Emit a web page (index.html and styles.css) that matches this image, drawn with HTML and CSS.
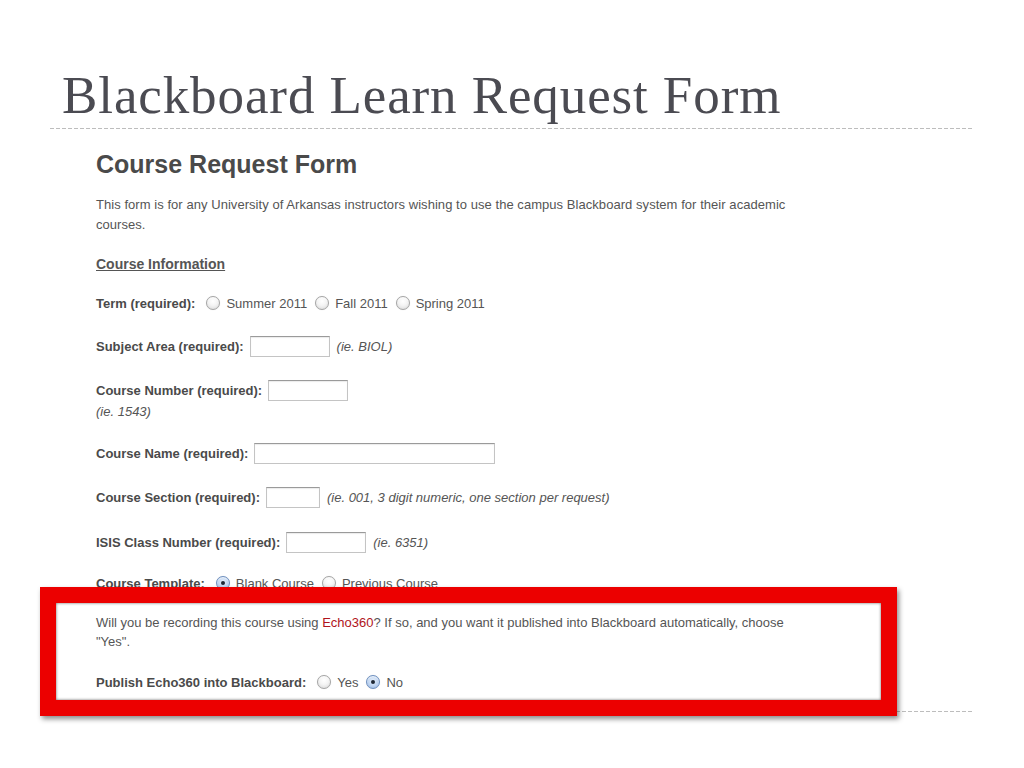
FILE: index.html
```html
<!DOCTYPE html>
<html>
<head>
<meta charset="utf-8">
<title>Blackboard Learn Request Form</title>
<link rel="stylesheet" href="styles.css">
</head>
<body>
<div class="slide">
  <h1 class="title">Blackboard Learn Request Form</h1>
  <div class="rule"></div>
  <div class="form">
    <h2 class="form-title">Course Request Form</h2>
    <p class="intro">This form is for any University of Arkansas instructors wishing to use the campus Blackboard system for their academic<br>courses.</p>
    <div class="section-head">Course Information</div>
    <div class="row r-term">
      <span class="label">Term (required):</span>
      <span class="radio gap-l"></span><span class="opt">Summer 2011</span>
      <span class="radio"></span><span class="opt">Fall 2011</span>
      <span class="radio"></span><span class="opt">Spring 2011</span>
    </div>
    <div class="row r-subject">
      <span class="label">Subject Area (required):</span>
      <span class="field w80"></span><span class="hint">(ie. BIOL)</span>
    </div>
    <div class="row r-number">
      <span class="label">Course Number (required):</span>
      <span class="field w80"></span>
    </div>
    <div class="row r-numhint"><span class="hint flush">(ie. 1543)</span></div>
    <div class="row r-name">
      <span class="label">Course Name (required):</span>
      <span class="field w241"></span>
    </div>
    <div class="row r-section">
      <span class="label">Course Section (required):</span>
      <span class="field w54"></span><span class="hint">(ie. 001, 3 digit numeric, one section per request)</span>
    </div>
    <div class="row r-isis">
      <span class="label">ISIS Class Number (required):</span>
      <span class="field w80"></span><span class="hint">(ie. 6351)</span>
    </div>
    <div class="row r-template">
      <span class="label">Course Template:</span>
      <span class="radio checked gap-l"></span><span class="opt">Blank Course</span>
      <span class="radio"></span><span class="opt">Previous Course</span>
    </div>
    <p class="echo">Will you be recording this course using <span class="red">Echo360</span>? If so, and you want it published into Blackboard automatically, choose<br>"Yes".</p>
    <div class="row r-publish">
      <span class="label">Publish Echo360 into Blackboard:</span>
      <span class="radio gap-l"></span><span class="opt">Yes</span>
      <span class="radio checked"></span><span class="opt">No</span>
    </div>
  </div>
  <div class="rule rule-bottom"></div>
  <div class="highlight"></div>
</div>
</body>
</html>
```
FILE: styles.css
```css
html, body {
  margin: 0;
  padding: 0;
  background: #ffffff;
}
.slide {
  position: relative;
  width: 1024px;
  height: 768px;
  overflow: hidden;
  background: #ffffff;
}
.title {
  margin: 0;
  padding: 67px 0 0 62px;
  font-family: "Liberation Serif", "Times New Roman", serif;
  font-weight: normal;
  font-size: 53px;
  line-height: 56px;
  letter-spacing: 0.9px;
  color: #4b4b52;
}
.rule {
  margin: 5px 0 0 50px;
  width: 922px;
  height: 1px;
  background: repeating-linear-gradient(90deg, #bdbdbd 0 4px, transparent 4px 6px);
}
.rule-bottom {
  margin-top: 19px;
}
.form {
  padding-left: 96px;
  font-family: "Liberation Sans", Arial, Helvetica, sans-serif;
  font-size: 13px;
  color: #555;
}
.form-title {
  margin: 20px 0 0 0;
  font-size: 25px;
  line-height: 30px;
  font-weight: bold;
  color: #4a4a4a;
}
.intro {
  margin: 16px 0 0 0;
  line-height: 20px;
  letter-spacing: 0.05px;
}
.section-head {
  margin-top: 19px;
  font-size: 14px;
  line-height: 20px;
  font-weight: bold;
  text-decoration: underline;
  color: #555;
}
.row {
  display: flex;
  align-items: center;
  height: 20px;
}
.label {
  font-weight: bold;
  color: #4a4a4a;
  white-space: nowrap;
}
.opt {
  margin-left: 6px;
  margin-right: 8px;
  white-space: nowrap;
}
.radio {
  flex: none;
  box-sizing: border-box;
  width: 14px;
  height: 14px;
  border-radius: 50%;
  border: 1px solid #a4a4a4;
  background: radial-gradient(circle at 50% 35%, #ffffff 0, #f4f4f4 45%, #d6d6d6 100%);
  box-shadow: inset 0 1px 1px rgba(255,255,255,0.8), 0 0 1px rgba(0,0,0,0.15);
  position: relative;
}
.radio.checked {
  border-color: #6d8fbf;
  background: radial-gradient(circle at 50% 40%, #e8f1fc 0, #bdd3f0 55%, #8fb0dc 100%);
}
.radio.checked::after {
  content: "";
  position: absolute;
  left: 4px;
  top: 4px;
  width: 4px;
  height: 4px;
  border-radius: 50%;
  background: #1d2633;
}
.gap-l {
  margin-left: 11px;
}
.field {
  flex: none;
  box-sizing: border-box;
  height: 21px;
  margin-left: 6px;
  border: 1px solid #c4c4c4;
  border-top-color: #9a9a9a;
  background: #fff;
  box-shadow: inset 0 1px 1px rgba(0,0,0,0.08);
}
.w80 { width: 80px; }
.w241 { width: 241px; }
.w54 { width: 54px; }
.hint {
  margin-left: 7px;
  font-style: italic;
  color: #555;
  white-space: nowrap;
}
.hint.flush {
  margin-left: 0;
}
.r-term { margin-top: 19px; }
.r-subject { margin-top: 23px; }
.r-number { margin-top: 24px; }
.r-numhint { margin-top: 1px; }
.r-name { margin-top: 22px; }
.r-section { margin-top: 24px; }
.r-isis { margin-top: 25px; }
.r-template { margin-top: 21px; }
.echo {
  margin: 20px 0 0 0;
  line-height: 19px;
}
.red {
  color: #b0141c;
}
.r-publish { margin-top: 21px; }
.highlight {
  position: absolute;
  left: 40px;
  top: 587px;
  width: 857px;
  height: 129px;
  box-sizing: border-box;
  border: 16px solid #ec0000;
  box-shadow: 2px 3px 5px rgba(0,0,0,0.45), inset 0 0 3px rgba(0,0,0,0.6);
}
```
